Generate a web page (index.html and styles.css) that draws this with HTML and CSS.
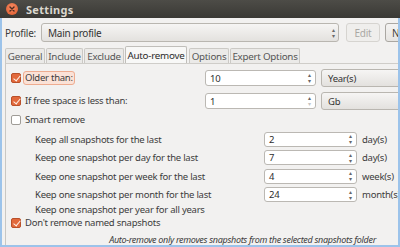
FILE: index.html
```html
<!DOCTYPE html>
<html lang="en">
<head>
	<meta charset="UTF-8">
	<title>Settings</title>
	<link rel="stylesheet" href="styles.css">
</head>
<body>

	<div class="window">
		<div class="titlebar">
			<span class="close-btn">
				<svg width="12" height="12" viewBox="0 0 12 12"><path d="M4 4 L8 8 M8 4 L4 8" stroke="#4a2a20" stroke-width="1.4" stroke-linecap="round"/></svg>
			</span>
			<span class="title">Settings</span>
		</div>

		<div class="frame">
			<div class="profile-row">
				<span class="profile-label">Profile:</span>
				<div class="combo profile-combo">Main profile<span class="combo-arrows"><i>&#9652;</i><i>&#9662;</i></span></div>
				<div class="btn disabled">Edit</div>
				<div class="btn next">New</div>
			</div>

			<div class="tabs">
				<div class="tab t-general">General</div>
				<div class="tab t-include">Include</div>
				<div class="tab t-exclude">Exclude</div>
				<div class="tab t-auto active">Auto-remove</div>
				<div class="tab t-options">Options</div>
				<div class="tab t-expert">Expert Options</div>
			</div>

			<div class="panel">
				<div class="row top-row">
					<span class="check on"></span>
					<div class="label-cell"><span class="label focused">Older than:</span></div>
					<div class="spin wide"><span>10</span><span class="arrows"><i>&#9652;</i><i>&#9662;</i></span></div>
					<div class="combo unit-combo">Year(s)</div>
				</div>
				<div class="row top-row">
					<span class="check on"></span>
					<div class="label-cell"><span class="label">If free space is less than:</span></div>
					<div class="spin wide"><span>1</span><span class="arrows"><i>&#9652;</i><i class="dim">&#9662;</i></span></div>
					<div class="combo unit-combo">Gb</div>
				</div>
				<div class="row smart-row">
					<span class="check"></span>
					<div class="label-cell"><span class="label">Smart remove</span></div>
				</div>

				<div class="keep-list">
					<div class="keep">
						<span class="keep-label">Keep all snapshots for the last</span>
						<div class="spin"><span>2</span><span class="arrows"><i>&#9652;</i><i>&#9662;</i></span></div>
						<span class="unit">day(s)</span>
					</div>
					<div class="keep">
						<span class="keep-label">Keep one snapshot per day for the last</span>
						<div class="spin"><span>7</span><span class="arrows"><i>&#9652;</i><i>&#9662;</i></span></div>
						<span class="unit">day(s)</span>
					</div>
					<div class="keep">
						<span class="keep-label">Keep one snapshot per week for the last</span>
						<div class="spin"><span>4</span><span class="arrows"><i>&#9652;</i><i>&#9662;</i></span></div>
						<span class="unit">week(s)</span>
					</div>
					<div class="keep">
						<span class="keep-label">Keep one snapshot per month for the last</span>
						<div class="spin"><span>24</span><span class="arrows"><i>&#9652;</i><i>&#9662;</i></span></div>
						<span class="unit">month(s)</span>
					</div>
					<div class="keep short">
						<span class="keep-label">Keep one snapshot per year for all years</span>
					</div>
				</div>

				<div class="row named-row">
					<span class="check on"></span>
					<div class="label-cell"><span class="label">Don't remove named snapshots</span></div>
				</div>

				<div class="note">Auto-remove only removes snapshots from the selected snapshots folder</div>
			</div>
		</div>
	</div>

</body>
</html>
```

FILE: styles.css
```css
* {
	box-sizing: border-box;
}
body {
	margin: 0;
	background: #f2f1f0;
	font-family: "Noto Sans", "Open Sans", sans-serif;
	font-size: 9.5px;
	letter-spacing: -0.25px;
	color: #3c3c3c;
}
i {
	font-style: normal;
}
.window {
	width: 400px;
	height: 247px;
	overflow: hidden;
	display: flex;
	flex-direction: column;
}
.titlebar {
	height: 18px;
	flex: none;
	display: flex;
	align-items: center;
	padding-left: 6px;
	background: linear-gradient(#4d4c47, #3a3935);
}
.close-btn {
	width: 12px;
	height: 12px;
	border-radius: 50%;
	background: radial-gradient(circle at 50% 35%, #f58a62, #df5a2c);
	display: flex;
}
.title {
	margin-left: 8px;
	font-weight: bold;
	font-size: 11px;
	color: #dcd8cf;
	letter-spacing: 0.3px;
}
.frame {
	flex: 1;
	border-left: 2px solid #9cc3ea;
	border-right: 2px solid #9cc3ea;
	border-bottom: 2px solid #9cc3ea;
	padding: 5px 0 0 3px;
	display: flex;
	flex-direction: column;
	min-height: 0;
	overflow: hidden;
}
.profile-row {
	display: flex;
	align-items: center;
	height: 19px;
	flex: none;
	white-space: nowrap;
}
.profile-row > * {
	flex: none;
}
.profile-label {
	width: 36px;
	font-size: 10px;
}
.combo {
	position: relative;
	height: 19px;
	border: 1px solid #b9b6b0;
	border-radius: 3px;
	background: linear-gradient(#f6f5f4, #e3e1de);
	padding-left: 6px;
	display: flex;
	align-items: center;
	white-space: nowrap;
	flex: none;
	color: #333;
}
.profile-combo {
	width: 298px;
	font-size: 10px;
}
.combo-arrows {
	position: absolute;
	right: 3px;
	top: 3px;
	display: flex;
	flex-direction: column;
	font-size: 6px;
	line-height: 6px;
	color: #6a6a6a;
}
.btn {
	height: 19px;
	border: 1px solid #c3c0bb;
	border-radius: 3px;
	background: linear-gradient(#f4f3f2, #e6e4e1);
	display: flex;
	align-items: center;
	justify-content: center;
	margin-left: 7px;
	width: 34px;
	font-size: 10px;
}
.btn.disabled {
	color: #aaa8a4;
	border-color: #d6d4d0;
	background: #efeeec;
}
.btn.next {
	margin-left: 5px;
	width: 40px;
	justify-content: flex-start;
	padding-left: 6px;
	border-color: #aaa7a2;
}
.tabs {
	display: flex;
	align-items: flex-end;
	margin-top: 4px;
	height: 17px;
	flex: none;
}
.tab {
	height: 15px;
	margin-right: 1px;
	border: 1px solid #cbc9c5;
	border-bottom: none;
	border-radius: 2px 2px 0 0;
	background: #ebeae8;
	color: #555;
	display: flex;
	align-items: center;
	justify-content: center;
	font-size: 9.8px;
}
.t-general { width: 40px; }
.t-include { width: 37px; }
.t-exclude { width: 40px; }
.t-auto { width: 62px; }
.t-options { width: 40px; }
.t-expert { width: 70px; }
.tab.active {
	height: 17px;
	background: #f8f8f7;
	color: #2b2b2b;
	border-color: #c0beba;
	margin-right: 2px;
}
.panel {
	flex: 1;
	border-left: 1px solid #c9c7c3;
	border-top: 1px solid #cfcdc9;
	padding: 5px 0 0 5px;
	display: flex;
	flex-direction: column;
	white-space: nowrap;
	min-height: 0;
}
.row {
	display: flex;
	align-items: center;
	flex: none;
}
.top-row {
	height: 18px;
	margin-bottom: 5px;
}
.check {
	width: 10px;
	height: 10px;
	flex: none;
	border: 1px solid #9f9c97;
	border-radius: 2px;
	background: #fff;
	position: relative;
}
.check.on {
	background: #e2693c;
	border-color: #b9502a;
}
.check.on::after {
	content: "";
	position: absolute;
	left: 2.5px;
	top: 0;
	width: 3px;
	height: 6px;
	border: solid #fff3ea;
	border-width: 0 1.5px 1.5px 0;
	transform: rotate(40deg);
}
.label-cell {
	width: 184px;
	flex: none;
	padding-left: 2px;
}
.label {
	display: inline-block;
	padding: 0 1px;
	border: 1px solid transparent;
	line-height: 12px;
}
.label.focused {
	background: #fbe2d7;
	border-color: #eeac90;
	border-radius: 3px;
}
.spin {
	height: 16px;
	border: 1px solid #bbb8b3;
	border-radius: 3px;
	background: #fff;
	display: flex;
	align-items: center;
	justify-content: space-between;
	padding-left: 4px;
	color: #2e2e2e;
	flex: none;
}
.spin.wide {
	width: 111px;
}
.arrows {
	display: flex;
	flex-direction: column;
	align-items: center;
	width: 9px;
	margin-right: 1px;
	font-size: 6px;
	line-height: 6px;
	color: #666;
}
.arrows i.dim {
	color: #c4c4c4;
}
.unit-combo {
	width: 90px;
	margin-left: 5px;
	height: 18px;
}
.smart-row {
	height: 10px;
}
.keep-list {
	padding-left: 24px;
	margin-top: 5px;
	flex: none;
}
.keep {
	display: flex;
	align-items: center;
	height: 18.5px;
}
.keep.short {
	height: 11px;
}
.keep-label {
	width: 229px;
	flex: none;
}
.keep .spin {
	width: 93px;
	height: 15px;
}
.unit {
	margin-left: 5px;
}
.named-row {
	height: 14px;
	margin-top: 1px;
}
.note {
	margin-top: 4px;
	align-self: flex-end;
	margin-right: 22px;
	font-style: italic;
	font-size: 9px;
	letter-spacing: -0.3px;
	line-height: 12px;
	flex: none;
}
```
